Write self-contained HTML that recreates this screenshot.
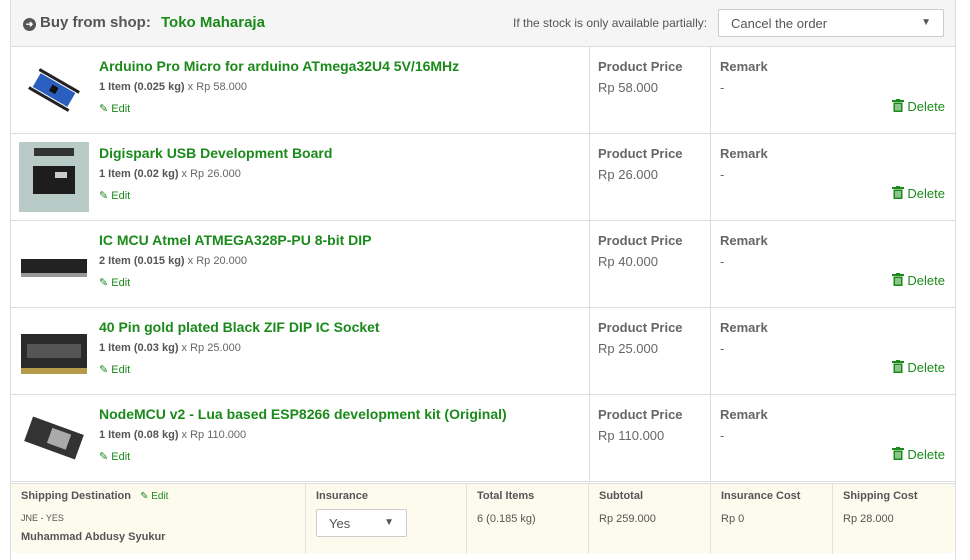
<!DOCTYPE html>
<html><head><meta charset="utf-8"><style>
*{box-sizing:border-box;margin:0;padding:0}
body{width:970px;height:545px;overflow:hidden;background:#fff;font-family:"Liberation Sans",sans-serif;color:#555;position:relative}
.wrap{position:absolute;left:10px;top:0;width:946px;height:560px;border-left:1px solid #ddd;border-right:1px solid #ddd}
.hdr{position:absolute;left:0;top:0;width:944px;height:47px;background:#f5f5f5;border-bottom:1px solid #ddd}
.hdr .t{position:absolute;left:12px;top:14px;font-size:15px;font-weight:bold;color:#555}
.hdr .t b{color:#1a8a1a;margin-left:6px}
.circ{display:inline-block;width:13px;height:13px;border-radius:50%;background:#555;color:#fff;font-size:9px;line-height:13px;text-align:center;vertical-align:0px;margin-right:4px}
.hdr .p{position:absolute;left:502px;top:16px;font-size:12px;color:#555}
.sel{position:absolute;background:#fff;border:1px solid #ccc;border-radius:2px;font-size:13px;color:#555}
.row{position:absolute;left:0;width:944px;height:87px;border-bottom:1px solid #ddd}
.c1{position:absolute;left:0;top:0;width:579px;height:86px;border-right:1px solid #ddd}
.c2{position:absolute;left:579px;top:0;width:121px;height:86px;border-right:1px solid #ddd}
.img{position:absolute;left:8px;top:8px;width:70px;height:70px}
.nm{position:absolute;left:88px;top:11px;font-size:14px;font-weight:bold;color:#1a8a1a}
.qt{position:absolute;left:88px;top:34px;font-size:11px;color:#666}
.qt b{color:#555}
.ed{position:absolute;left:88px;top:55px;font-size:11px;color:#1a8a1a}
.lb{position:absolute;top:12px;font-size:13px;font-weight:bold;color:#666}
.vl{position:absolute;top:33px;font-size:13px;color:#666}
.del{position:absolute;right:10px;top:52px;font-size:13px;color:#1a8a1a}
.del svg{vertical-align:-1px;margin-right:3px}
.foot{position:absolute;left:0;top:483px;width:944px;height:70px;background:#fdfbee;border-top:1px solid #ddd}
.fc{position:absolute;top:0;height:70px;border-right:1px solid #e4e2d4}
.fl{position:absolute;top:6px;font-size:11px;font-weight:bold;color:#555}
.fv{position:absolute;top:29px;font-size:11px;color:#555}
</style></head><body>
<svg width="0" height="0" style="position:absolute"><defs><symbol id="tr" viewBox="0 0 12 13"><rect x="0" y="1" width="12" height="2" fill="#1a8a1a"/><rect x="4" y="0" width="4" height="2" fill="#1a8a1a"/><rect x="1.5" y="3.5" width="9" height="9.5" fill="#1a8a1a"/><rect x="3.5" y="5" width="1" height="6.5" fill="#fff"/><rect x="5.5" y="5" width="1" height="6.5" fill="#fff"/><rect x="7.5" y="5" width="1" height="6.5" fill="#fff"/></symbol></defs></svg>
<div class="wrap">
<div class="hdr"><div class="t"><span class="circ">➜</span>Buy from shop: <b>Toko Maharaja</b></div>
<div class="p">If the stock is only available partially:</div>
<div class="sel" style="left:707px;top:9px;width:226px;height:28px;padding:6px 12px">Cancel the order<span style="position:absolute;right:12px;top:7px;font-size:10px">▼</span></div></div>

<div class="row" style="top:47px"><div class="c1"><svg class="img" viewBox="0 0 70 70"><g transform="rotate(30 35 35)"><rect x="15" y="27" width="40" height="16" fill="#2a5fbf"/><rect x="12" y="23" width="46" height="3" fill="#222"/><rect x="12" y="44" width="46" height="3" fill="#222"/><rect x="31" y="31" width="7" height="7" fill="#111"/></g></svg>
<div class="nm">Arduino Pro Micro for arduino ATmega32U4 5V/16MHz</div><div class="qt"><b>1 Item (0.025 kg)</b> x Rp 58.000</div><div class="ed">✎ Edit</div></div>
<div class="c2"><div class="lb" style="left:8px">Product Price</div><div class="vl" style="left:8px">Rp 58.000</div></div>
<div class="lb" style="left:709px">Remark</div><div class="vl" style="left:709px">-</div><div class="del"><svg width="12" height="13"><use href="#tr"/></svg>Delete</div></div>

<div class="row" style="top:134px"><div class="c1"><svg class="img" viewBox="0 0 70 70"><rect width="70" height="70" fill="#b8cbc6"/><rect x="14" y="24" width="42" height="28" fill="#1d1d1d"/><rect x="15" y="6" width="40" height="8" fill="#333"/><rect x="36" y="30" width="12" height="6" fill="#ccc"/></svg>
<div class="nm">Digispark USB Development Board</div><div class="qt"><b>1 Item (0.02 kg)</b> x Rp 26.000</div><div class="ed">✎ Edit</div></div>
<div class="c2"><div class="lb" style="left:8px">Product Price</div><div class="vl" style="left:8px">Rp 26.000</div></div>
<div class="lb" style="left:709px">Remark</div><div class="vl" style="left:709px">-</div><div class="del"><svg width="12" height="13"><use href="#tr"/></svg>Delete</div></div>

<div class="row" style="top:221px"><div class="c1"><svg class="img" viewBox="0 0 70 70"><rect x="2" y="30" width="66" height="14" fill="#222"/><rect x="2" y="44" width="66" height="4" fill="#999"/></svg>
<div class="nm">IC MCU Atmel ATMEGA328P-PU 8-bit DIP</div><div class="qt"><b>2 Item (0.015 kg)</b> x Rp 20.000</div><div class="ed">✎ Edit</div></div>
<div class="c2"><div class="lb" style="left:8px">Product Price</div><div class="vl" style="left:8px">Rp 40.000</div></div>
<div class="lb" style="left:709px">Remark</div><div class="vl" style="left:709px">-</div><div class="del"><svg width="12" height="13"><use href="#tr"/></svg>Delete</div></div>

<div class="row" style="top:308px"><div class="c1"><svg class="img" viewBox="0 0 70 70"><rect x="2" y="18" width="66" height="36" fill="#2a2a2a"/><rect x="8" y="28" width="54" height="14" fill="#555"/><rect x="2" y="52" width="66" height="6" fill="#b59a4a"/></svg>
<div class="nm">40 Pin gold plated Black ZIF DIP IC Socket</div><div class="qt"><b>1 Item (0.03 kg)</b> x Rp 25.000</div><div class="ed">✎ Edit</div></div>
<div class="c2"><div class="lb" style="left:8px">Product Price</div><div class="vl" style="left:8px">Rp 25.000</div></div>
<div class="lb" style="left:709px">Remark</div><div class="vl" style="left:709px">-</div><div class="del"><svg width="12" height="13"><use href="#tr"/></svg>Delete</div></div>

<div class="row" style="top:395px"><div class="c1"><svg class="img" viewBox="0 0 70 70"><g transform="rotate(20 35 35)"><rect x="8" y="22" width="54" height="26" fill="#333"/><rect x="30" y="26" width="20" height="16" fill="#aaa"/></g></svg>
<div class="nm">NodeMCU v2 - Lua based ESP8266 development kit (Original)</div><div class="qt"><b>1 Item (0.08 kg)</b> x Rp 110.000</div><div class="ed">✎ Edit</div></div>
<div class="c2"><div class="lb" style="left:8px">Product Price</div><div class="vl" style="left:8px">Rp 110.000</div></div>
<div class="lb" style="left:709px">Remark</div><div class="vl" style="left:709px">-</div><div class="del"><svg width="12" height="13"><use href="#tr"/></svg>Delete</div></div>

<div class="foot">
<div class="fc" style="left:0;width:295px"><div class="fl" style="left:10px">Shipping Destination <span style="color:#1a8a1a;font-weight:normal;font-size:10px;margin-left:6px">✎ Edit</span></div><div class="fv" style="left:10px;font-size:9px">JNE - YES</div><div class="fl" style="left:10px;top:47px">Muhammad Abdusy Syukur</div></div>
<div class="fc" style="left:295px;width:161px"><div class="fl" style="left:10px">Insurance</div><div class="sel" style="left:10px;top:25px;width:91px;height:28px;padding:6px 12px">Yes<span style="position:absolute;right:12px;top:7px;font-size:10px">▼</span></div></div>
<div class="fc" style="left:456px;width:122px"><div class="fl" style="left:10px">Total Items</div><div class="fv" style="left:10px">6 (0.185 kg)</div></div>
<div class="fc" style="left:578px;width:122px"><div class="fl" style="left:10px">Subtotal</div><div class="fv" style="left:10px">Rp 259.000</div></div>
<div class="fc" style="left:700px;width:122px"><div class="fl" style="left:10px">Insurance Cost</div><div class="fv" style="left:10px">Rp 0</div></div>
<div class="fc" style="left:822px;width:122px;border:none"><div class="fl" style="left:10px">Shipping Cost</div><div class="fv" style="left:10px">Rp 28.000</div></div>
</div>
</div>
</body></html>
